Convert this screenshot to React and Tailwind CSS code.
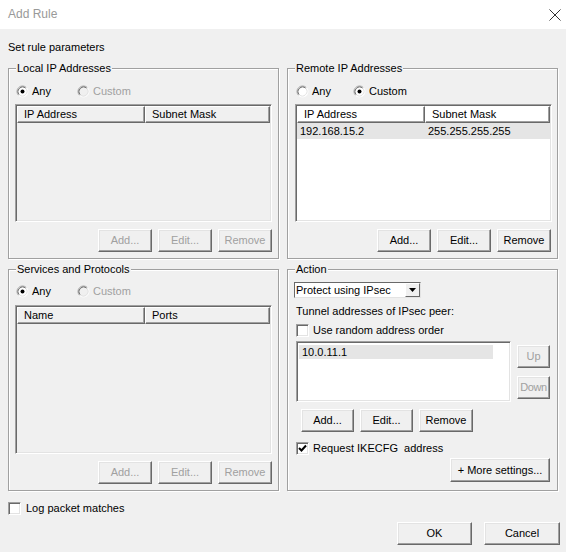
import React from "react";

function Btn({ children, disabled, className = "" }) {
  return (
    <div
      className={
        "flex items-center justify-center whitespace-nowrap bg-[#f0f0f0] border border-t-white border-l-white border-b-[#696969] border-r-[#696969] shadow-[inset_-1px_-1px_0_#a0a0a0,inset_1px_1px_0_#e3e3e3] " +
        (disabled ? "text-[#a0a0a0] " : "text-black ") +
        className
      }
    >
      {children}
    </div>
  );
}

function Radio({ checked, disabled }) {
  return (
    <svg width="13" height="13" viewBox="0 0 13 13" className="shrink-0">
      <circle cx="6.5" cy="6.5" r="5.5" fill={disabled ? "#f0f0f0" : "#ffffff"} />
      <path d="M2.61 10.39 A5.5 5.5 0 0 1 10.39 2.61" fill="none" stroke="#a0a0a0" strokeWidth="1" />
      <path d="M10.39 2.61 A5.5 5.5 0 0 1 2.61 10.39" fill="none" stroke="#ffffff" strokeWidth="1" />
      <path d="M3.32 9.68 A4.5 4.5 0 0 1 9.68 3.32" fill="none" stroke="#696969" strokeWidth="1" />
      <path d="M9.68 3.32 A4.5 4.5 0 0 1 3.32 9.68" fill="none" stroke="#e3e3e3" strokeWidth="1" />
      {checked && <circle cx="6.5" cy="6.5" r="2" fill="#000" />}
    </svg>
  );
}

function Check({ checked }) {
  return (
    <div className="w-[13px] h-[13px] shrink-0 bg-white border border-t-[#a0a0a0] border-l-[#a0a0a0] border-b-white border-r-white shadow-[inset_1px_1px_0_#696969,inset_-1px_-1px_0_#e3e3e3] flex items-center justify-center">
      {checked && (
        <svg width="9" height="9" viewBox="0 0 9 9">
          <path d="M1 4 L3.5 6.5 L8 1.5" fill="none" stroke="#000" strokeWidth="2" />
        </svg>
      )}
    </div>
  );
}

function Group({ title, className = "", children }) {
  return (
    <div
      className={
        "relative border border-[#a0a0a0] shadow-[1px_1px_0_#ffffff,inset_1px_1px_0_#ffffff] " +
        className
      }
    >
      <span className="absolute left-[7px] -top-[7px] bg-[#f0f0f0] px-[1px] leading-[13px] whitespace-nowrap">
        {title}
      </span>
      {children}
    </div>
  );
}

function Header({ a, b }) {
  return (
    <div className="flex h-[17px] shrink-0">
      <div className="w-[128px] h-full pl-[6px] flex items-center border border-t-white border-l-white border-b-[#696969] border-r-[#696969] shadow-[inset_-1px_-1px_0_#a0a0a0]">
        {a}
      </div>
      <div className="flex-1 h-full pl-[6px] flex items-center border border-t-white border-l-white border-b-[#696969] border-r-[#696969] shadow-[inset_-1px_-1px_0_#a0a0a0]">
        {b}
      </div>
    </div>
  );
}

function Table({ a, b, white, height, rows = [] }) {
  return (
    <div
      className={
        "w-[257px] flex flex-col border border-t-[#a0a0a0] border-l-[#a0a0a0] border-b-white border-r-white shadow-[inset_1px_1px_0_#696969,inset_-1px_-1px_0_#e3e3e3] p-[1px] " +
        (white ? "bg-white" : "bg-[#f0f0f0]")
      }
      style={{ height }}
    >
      <Header a={a} b={b} />
      {rows.map((r, i) => (
        <div key={i} className="flex h-[16px] items-center bg-[#e5e5e5]">
          <div className="w-[128px] pl-[3px]">{r[0]}</div>
          <div className="flex-1 pl-[3px]">{r[1]}</div>
        </div>
      ))}
    </div>
  );
}

function ButtonRow({ disabled }) {
  return (
    <div className="flex justify-end gap-[6px] pr-[6px]">
      <Btn disabled={disabled} className="w-[54px] h-[23px]">Add...</Btn>
      <Btn disabled={disabled} className="w-[54px] h-[23px]">Edit...</Btn>
      <Btn disabled={disabled} className="w-[54px] h-[23px]">Remove</Btn>
    </div>
  );
}

function RadioRow({ anyChecked, customDisabled, anyWidth }) {
  return (
    <div className="flex items-center h-[13px] ml-[1px]">
      <div className="flex items-center gap-[3px]" style={{ width: anyWidth }}>
        <Radio checked={anyChecked} />
        <span>Any</span>
      </div>
      <div className="flex items-center gap-[3px]">
        <Radio checked={!anyChecked} disabled={customDisabled} />
        <span className={customDisabled ? "text-[#a0a0a0]" : ""}>Custom</span>
      </div>
    </div>
  );
}

export default function App() {
  return (
    <div className="w-[566px] h-[552px] bg-[#f0f0f0] font-['Liberation_Sans',Arial,sans-serif] text-[11px] leading-[13px] text-black flex flex-col overflow-hidden">
      <div className="h-[29px] bg-white flex items-center justify-between pl-[8px] pr-[5px] shrink-0">
        <span className="text-[12px] text-[#999999]">Add Rule</span>
        <svg width="12" height="12" viewBox="0 0 12 12">
          <path d="M0.5 0.5 L11.5 11.5 M11.5 0.5 L0.5 11.5" stroke="#333" strokeWidth="1" />
        </svg>
      </div>
      <div className="px-[8px] flex flex-col">
        <div className="mt-[12px] h-[13px]">Set rule parameters</div>
        <div className="mt-[14px] grid grid-cols-[271px_271px] gap-x-[8px] gap-y-[10px]">
          <Group title="Local IP Addresses" className="h-[191px]">
            <div className="flex flex-col pl-[6px] pt-[16px]">
              <RadioRow anyChecked customDisabled anyWidth={61} />
              <div className="mt-[6px]">
                <Table a="IP Address" b="Subnet Mask" height={118} />
              </div>
              <div className="mt-[7px]">
                <ButtonRow disabled />
              </div>
            </div>
          </Group>
          <Group title="Remote IP Addresses" className="h-[191px]">
            <div className="flex flex-col pl-[7px] pt-[16px]">
              <RadioRow anyChecked={false} anyWidth={57} />
              <div className="mt-[6px]">
                <Table
                  a="IP Address"
                  b="Subnet Mask"
                  height={118}
                  white
                  rows={[["192.168.15.2", "255.255.255.255"]]}
                />
              </div>
              <div className="mt-[7px]">
                <ButtonRow />
              </div>
            </div>
          </Group>
          <Group title="Services and Protocols" className="h-[222px]">
            <div className="flex flex-col pl-[6px] pt-[15px]">
              <RadioRow anyChecked customDisabled anyWidth={61} />
              <div className="mt-[7px]">
                <Table a="Name" b="Ports" height={149} />
              </div>
              <div className="mt-[7px]">
                <ButtonRow disabled />
              </div>
            </div>
          </Group>
          <Group title="Action" className="h-[222px]">
            <div className="flex flex-col pt-[12px]">
              <div className="ml-[6px] w-[127px] h-[16px] bg-white border border-t-[#696969] border-l-[#696969] border-b-[#e3e3e3] border-r-[#e3e3e3] flex items-center justify-between">
                <span className="pl-[1px] whitespace-nowrap">Protect using IPsec</span>
                <div className="w-[15px] h-[14px] flex items-center justify-center bg-[#f0f0f0] border border-t-white border-l-white border-b-[#696969] border-r-[#696969]">
                  <svg width="7" height="4" viewBox="0 0 7 4">
                    <path d="M0 0 H7 L3.5 4 Z" fill="#000" />
                  </svg>
                </div>
              </div>
              <div className="mt-[7px] ml-[8px] h-[13px] whitespace-nowrap">Tunnel addresses of IPsec peer:</div>
              <div className="mt-[6px] ml-[8px] flex items-center gap-[4px] h-[13px]">
                <Check />
                <span>Use random address order</span>
              </div>
              <div className="mt-[4px] ml-[8px] flex">
                <div className="w-[215px] h-[61px] bg-white border border-t-[#a0a0a0] border-l-[#a0a0a0] border-b-white border-r-white shadow-[inset_1px_1px_0_#696969,inset_-1px_-1px_0_#e3e3e3] pt-[3px] pl-[2px]">
                  <div className="w-[194px] h-[14px] bg-[#e5e5e5] flex items-center pl-[3px]">10.0.11.1</div>
                </div>
                <div className="ml-[6px] flex flex-col pt-[4px]">
                  <Btn disabled className="w-[33px] h-[23px]">Up</Btn>
                  <Btn disabled className="w-[33px] h-[23px] mt-[8px] tracking-[-0.4px]">Down</Btn>
                </div>
              </div>
              <div className="mt-[7px] ml-[13px] flex gap-[6px]">
                <Btn className="w-[53px] h-[23px]">Add...</Btn>
                <Btn className="w-[53px] h-[23px]">Edit...</Btn>
                <Btn className="w-[54px] h-[23px]">Remove</Btn>
              </div>
              <div className="mt-[10px] ml-[8px] flex items-center gap-[4px] h-[13px]">
                <Check checked />
                <span className="whitespace-pre">Request IKECFG  address</span>
              </div>
              <div className="mt-[3px] flex justify-end pr-[7px]">
                <Btn className="w-[100px] h-[24px]">+ More settings...</Btn>
              </div>
            </div>
          </Group>
        </div>
        <div className="mt-[11px] flex items-center gap-[5px] h-[13px]">
          <Check />
          <span>Log packet matches</span>
        </div>
        <div className="mt-[7px] flex justify-end gap-[12px] mr-[-2px]">
          <Btn className="w-[75px] h-[23px]">OK</Btn>
          <Btn className="w-[76px] h-[23px]">Cancel</Btn>
        </div>
      </div>
    </div>
  );
}
